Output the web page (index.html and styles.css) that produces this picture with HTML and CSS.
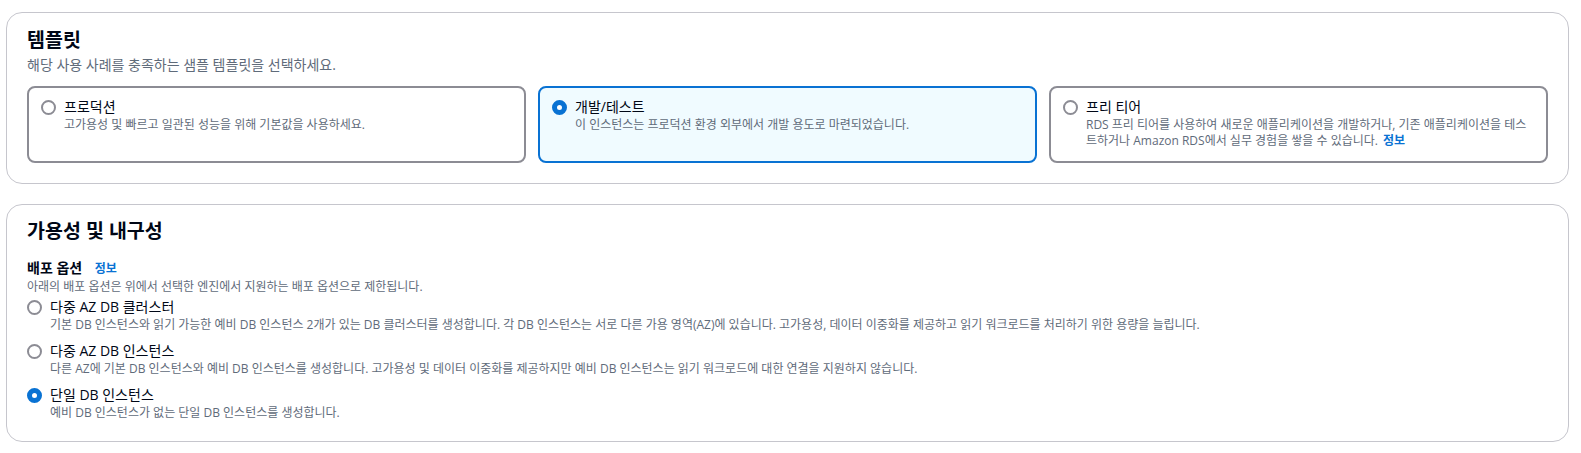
FILE: index.html
```html
<!DOCTYPE html>
<html lang="ko">
<head>
<meta charset="utf-8">
<title>템플릿</title>
<link rel="stylesheet" href="styles.css">
</head>
<body>
<div class="page">
  <section class="container templates">
    <h2 class="heading">템플릿</h2>
    <p class="subtitle">해당 사용 사례를 충족하는 샘플 템플릿을 선택하세요.</p>
    <div class="tiles">
      <div class="tile">
        <span class="radio"></span>
        <div class="tile-body">
          <div class="tile-title">프로덕션</div>
          <div class="desc">고가용성 및 빠르고 일관된 성능을 위해 기본값을 사용하세요.</div>
        </div>
      </div>
      <div class="tile tile-selected">
        <span class="radio radio-checked"></span>
        <div class="tile-body">
          <div class="tile-title">개발/테스트</div>
          <div class="desc">이 인스턴스는 프로덕션 환경 외부에서 개발 용도로 마련되었습니다.</div>
        </div>
      </div>
      <div class="tile">
        <span class="radio"></span>
        <div class="tile-body">
          <div class="tile-title">프리 티어</div>
          <div class="desc">RDS 프리 티어를 사용하여 새로운 애플리케이션을 개발하거나, 기존 애플리케이션을 테스트하거나 Amazon RDS에서 실무 경험을 쌓을 수 있습니다. <a class="info info-inline">정보</a></div>
        </div>
      </div>
    </div>
  </section>

  <section class="container availability">
    <h2 class="heading">가용성 및 내구성</h2>
    <div class="field">
      <div class="field-label">배포 옵션 <a class="info info-label">정보</a></div>
      <div class="desc">아래의 배포 옵션은 위에서 선택한 엔진에서 지원하는 배포 옵션으로 제한됩니다.</div>
      <div class="options">
        <div class="option">
          <span class="radio"></span>
          <div>
            <div class="opt-title">다중 AZ DB 클러스터</div>
            <div class="desc">기본 DB 인스턴스와 읽기 가능한 예비 DB 인스턴스 2개가 있는 DB 클러스터를 생성합니다. 각 DB 인스턴스는 서로 다른 가용 영역(AZ)에 있습니다. 고가용성, 데이터 이중화를 제공하고 읽기 워크로드를 처리하기 위한 용량을 늘립니다.</div>
          </div>
        </div>
        <div class="option">
          <span class="radio"></span>
          <div>
            <div class="opt-title">다중 AZ DB 인스턴스</div>
            <div class="desc">다른 AZ에 기본 DB 인스턴스와 예비 DB 인스턴스를 생성합니다. 고가용성 및 데이터 이중화를 제공하지만 예비 DB 인스턴스는 읽기 워크로드에 대한 연결을 지원하지 않습니다.</div>
          </div>
        </div>
        <div class="option">
          <span class="radio radio-checked"></span>
          <div>
            <div class="opt-title">단일 DB 인스턴스</div>
            <div class="desc">예비 DB 인스턴스가 없는 단일 DB 인스턴스를 생성합니다.</div>
          </div>
        </div>
      </div>
    </div>
  </section>
</div>
</body>
</html>
```

FILE: styles.css
```css
* { box-sizing: border-box; }

html, body {
  margin: 0;
  padding: 0;
  background: #ffffff;
}

body {
  font-family: "Open Sans", "Noto Sans CJK KR", sans-serif;
  color: #000716;
  font-size: 14px;
  line-height: 20px;
}

.page {
  padding: 12px 12px 0 6px;
  display: flex;
  flex-direction: column;
  gap: 20px;
}

.container {
  border: 1px solid #c6c6cd;
  border-radius: 16px;
  background: #ffffff;
  padding: 15px 20px 20px 20px;
}

.availability {
  padding-top: 14px;
  padding-bottom: 20px;
}

.heading {
  margin: 0;
  font-size: 19.5px;
  line-height: 24px;
  font-weight: 700;
  color: #000716;
}

.subtitle {
  margin: 3px 0 0 0;
  font-size: 14px;
  line-height: 20px;
  color: #5f6b7a;
}

.tiles {
  margin-top: 11px;
  display: grid;
  grid-template-columns: repeat(3, 1fr);
  gap: 12px;
}

.tile {
  display: flex;
  align-items: flex-start;
  gap: 8px;
  border: 2px solid #8c8c94;
  border-radius: 8px;
  padding: 9px 12px 12px 12px;
  background: #ffffff;
}

.tile-selected {
  border-color: #0972d3;
  background: #f0fbff;
}

.tile-body {
  flex: 1;
  min-width: 0;
}

.tile-title {
  font-size: 14px;
  line-height: 20px;
  color: #000716;
}

.desc {
  font-size: 12px;
  line-height: 16px;
  color: #5f6b7a;
}

.radio {
  flex: none;
  width: 15px;
  height: 15px;
  margin-top: 3px;
  border-radius: 50%;
  border: 2px solid #8c8c94;
  background: #ffffff;
}

.radio-checked {
  border: 5px solid #0972d3;
}

.info {
  color: #0972d3;
  font-weight: 700;
  font-size: 12px;
  text-decoration: none;
}

.info-inline {
  margin-left: 2px;
}

.field {
  margin-top: 15px;
}

.field-label {
  font-size: 14px;
  line-height: 20px;
  font-weight: 700;
  color: #000716;
}

.info-label {
  margin-left: 9px;
}

.options {
  margin-top: 2px;
  display: flex;
  flex-direction: column;
  gap: 8px;
}

.option {
  display: flex;
  align-items: flex-start;
  gap: 8px;
}

.opt-title {
  font-size: 14px;
  line-height: 20px;
  color: #000716;
}
```
